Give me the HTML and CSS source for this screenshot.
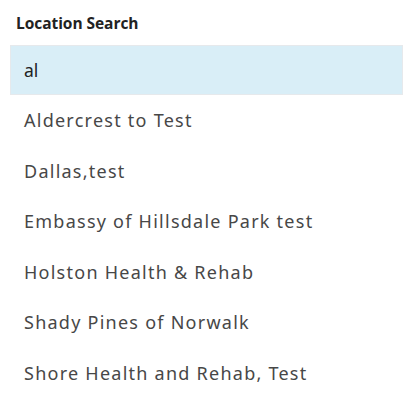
FILE: index.html
```
<!DOCTYPE html>
<html>
<head>
<meta charset="utf-8">
<link rel="stylesheet" href="styles.css">
</head>
<body>
<div class="panel">
  <div class="label">Location Search</div>
  <div class="input">al</div>
  <ul class="results">
    <li>Aldercrest to Test</li>
    <li>Dallas,test</li>
    <li>Embassy of Hillsdale Park test</li>
    <li>Holston Health &amp; Rehab</li>
    <li>Shady Pines of Norwalk</li>
    <li>Shore Health and Rehab, Test</li>
  </ul>
</div>
</body>
</html>
```
FILE: styles.css
```
html, body {
  margin: 0;
  padding: 0;
  background: #ffffff;
}
.panel {
  padding: 13px 12px 0 10px;
}
.label {
  font-family: "Open Sans", sans-serif;
  font-weight: 700;
  font-size: 15.5px;
  letter-spacing: -0.05px;
  color: #222;
  padding-left: 6px;
  height: 20px;
  line-height: 20px;
}
.input {
  margin-top: 12px;
  height: 48px;
  line-height: 48px;
  background: #d9eef7;
  border: 1px solid #e6e9ec;
  padding-left: 13px;
  font-family: "Noto Sans", sans-serif;
  font-size: 17.5px;
  color: #222;
}
.results {
  list-style: none;
  margin: 0;
  padding: 0;
}
.results li {
  height: 50.5px;
  line-height: 50.5px;
  padding-left: 14px;
  font-family: "Noto Sans", sans-serif;
  font-size: 18px;
  color: #474747;
  letter-spacing: 1.25px;
}
```
